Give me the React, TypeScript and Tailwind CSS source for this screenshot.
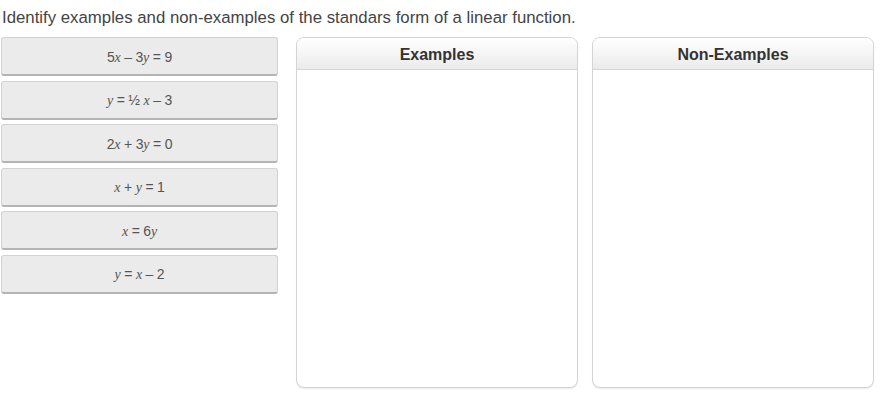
import React from 'react';

const V = ({ children }: { children: React.ReactNode }) => (
  <span className="italic" style={{ fontFamily: '"Liberation Serif", "DejaVu Serif", serif' }}>{children}</span>
);

const items: React.ReactNode[] = [
  <>5<V>x</V> – 3<V>y</V> = 9</>,
  <><V>y</V> = ½ <V>x</V> – 3</>,
  <>2<V>x</V> + 3<V>y</V> = 0</>,
  <><V>x</V> + <V>y</V> = 1</>,
  <><V>x</V> = 6<V>y</V></>,
  <><V>y</V> = <V>x</V> – 2</>,
];

function Bin({ title }: { title: string }) {
  return (
    <div className="w-[282px] h-[351px] border border-[#d4d4d4] rounded-[8px] bg-white shadow-[0_1px_1px_rgba(0,0,0,0.08)] flex flex-col overflow-hidden">
      <div className="h-[32px] shrink-0 border-b border-[#d4d4d4] bg-gradient-to-b from-white to-[#ebebeb] flex items-center justify-center text-[16px] font-bold text-[#333] pt-[2px]">
        {title}
      </div>
      <div className="flex-1" />
    </div>
  );
}

export default function App() {
  return (
    <div className="w-[882px] h-[408px] bg-white" style={{ fontFamily: '"Liberation Sans", Arial, sans-serif' }}>
      <div className="pt-[8px] pl-[2px] text-[16.8px] leading-[20px] text-[#444] h-[37px]">
        Identify examples and non-examples of the standars form of a linear function.
      </div>
      <div className="flex pl-[1px]">
        <div className="w-[277px] flex flex-col gap-[4.5px]">
          {items.map((it, i) => (
            <div
              key={i}
              className="h-[39px] bg-[#ebebeb] border border-[#d2d2d2] border-b-2 border-b-[#b4b4b4] rounded-[3px] flex items-center justify-center text-[14px] text-[#555] tracking-[-0.2px] pt-[2px]"
            >
              <span>{it}</span>
            </div>
          ))}
        </div>
        <div className="ml-[18px]">
          <Bin title="Examples" />
        </div>
        <div className="ml-[14px]">
          <Bin title="Non-Examples" />
        </div>
      </div>
    </div>
  );
}
